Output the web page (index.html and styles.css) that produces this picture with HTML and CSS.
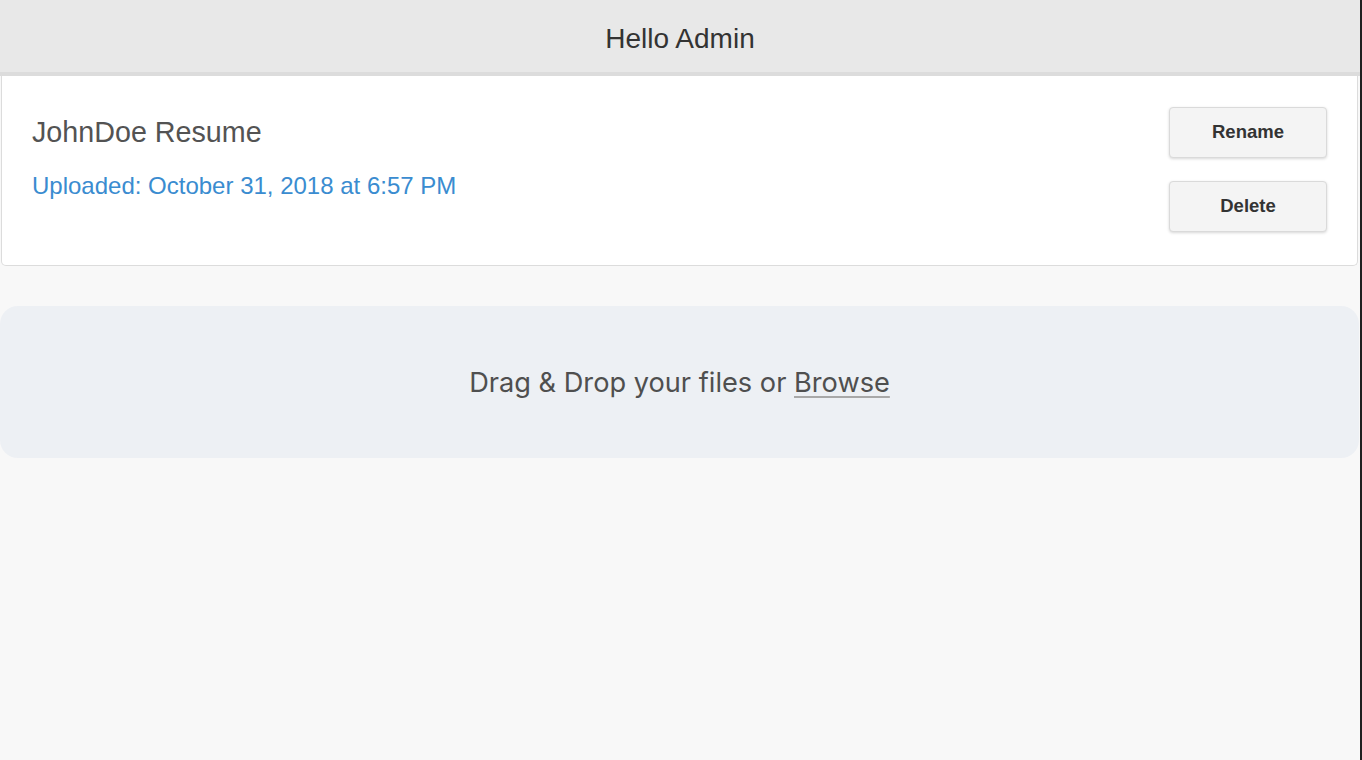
FILE: index.html
```html
<!DOCTYPE html>
<html lang="en">
<head>
<meta charset="utf-8">
<title>Hello Admin</title>
<link rel="stylesheet" href="styles.css">
</head>
<body>
<div class="page">
  <header class="topbar">Hello Admin</header>
  <section class="file-card">
    <div class="file-info">
      <h2 class="file-title">JohnDoe Resume</h2>
      <p class="file-date">Uploaded: October 31, 2018 at 6:57 PM</p>
    </div>
    <div class="file-actions">
      <button class="btn" type="button">Rename</button>
      <button class="btn" type="button">Delete</button>
    </div>
  </section>
  <section class="dropzone">
    <span class="drop-label">Drag &amp; Drop your files or <span class="browse">Browse</span></span>
  </section>
</div>
<div class="edge"></div>
</body>
</html>
```
FILE: styles.css
```css
html, body {
  margin: 0;
  padding: 0;
  height: 100%;
}
body {
  display: flex;
  background: #f8f8f8;
  font-family: "Liberation Sans", Arial, sans-serif;
  overflow: hidden;
}
.page {
  flex: 1;
  display: flex;
  flex-direction: column;
  min-width: 0;
}
.edge {
  width: 2px;
  background: #1f1f1f;
  flex: none;
}
.topbar {
  box-sizing: content-box;
  height: 66px;
  padding-top: 6px;
  background: #e8e8e8;
  border-bottom: 4px solid #dcdcdc;
  display: flex;
  align-items: center;
  justify-content: center;
  font-size: 28px;
  color: #333;
}
.file-card {
  margin: 0 2px 0 1px;
  background: #fff;
  border: 1px solid #dcdcdc;
  border-top: none;
  border-radius: 0 0 5px 5px;
  display: flex;
  justify-content: space-between;
  align-items: flex-start;
  padding: 31px 30px 33px 30px;
}
.file-info {
  padding-top: 9px;
}
.file-title {
  margin: 0;
  font-size: 28.7px;
  line-height: 32px;
  font-weight: normal;
  color: #535353;
}
.file-date {
  margin: 24px 0 0;
  font-size: 24px;
  line-height: 28px;
  color: #3a8cd0;
}
.file-actions {
  display: flex;
  flex-direction: column;
  gap: 23px;
}
.btn {
  width: 158px;
  height: 51px;
  background: #f4f4f4;
  border: 1px solid #dadada;
  border-radius: 4px;
  box-shadow: 0 1px 3px rgba(0, 0, 0, 0.16);
  font-family: "Liberation Sans", Arial, sans-serif;
  font-weight: bold;
  font-size: 18.5px;
  color: #333;
  padding: 0 0 2px;
}
.dropzone {
  box-sizing: border-box;
  margin: 40px 1px 0 0;
  height: 152px;
  padding-top: 1px;
  background: #edf0f4;
  border-radius: 18px;
  display: flex;
  align-items: center;
  justify-content: center;
}
.drop-label {
  font-family: "Inter", "Noto Sans", sans-serif;
  font-size: 27.2px;
  color: #4f4f4f;
}
.browse {
  text-decoration: underline;
  text-decoration-color: #a8a8a8;
  text-decoration-thickness: 2px;
  text-underline-offset: 4px;
}
```
